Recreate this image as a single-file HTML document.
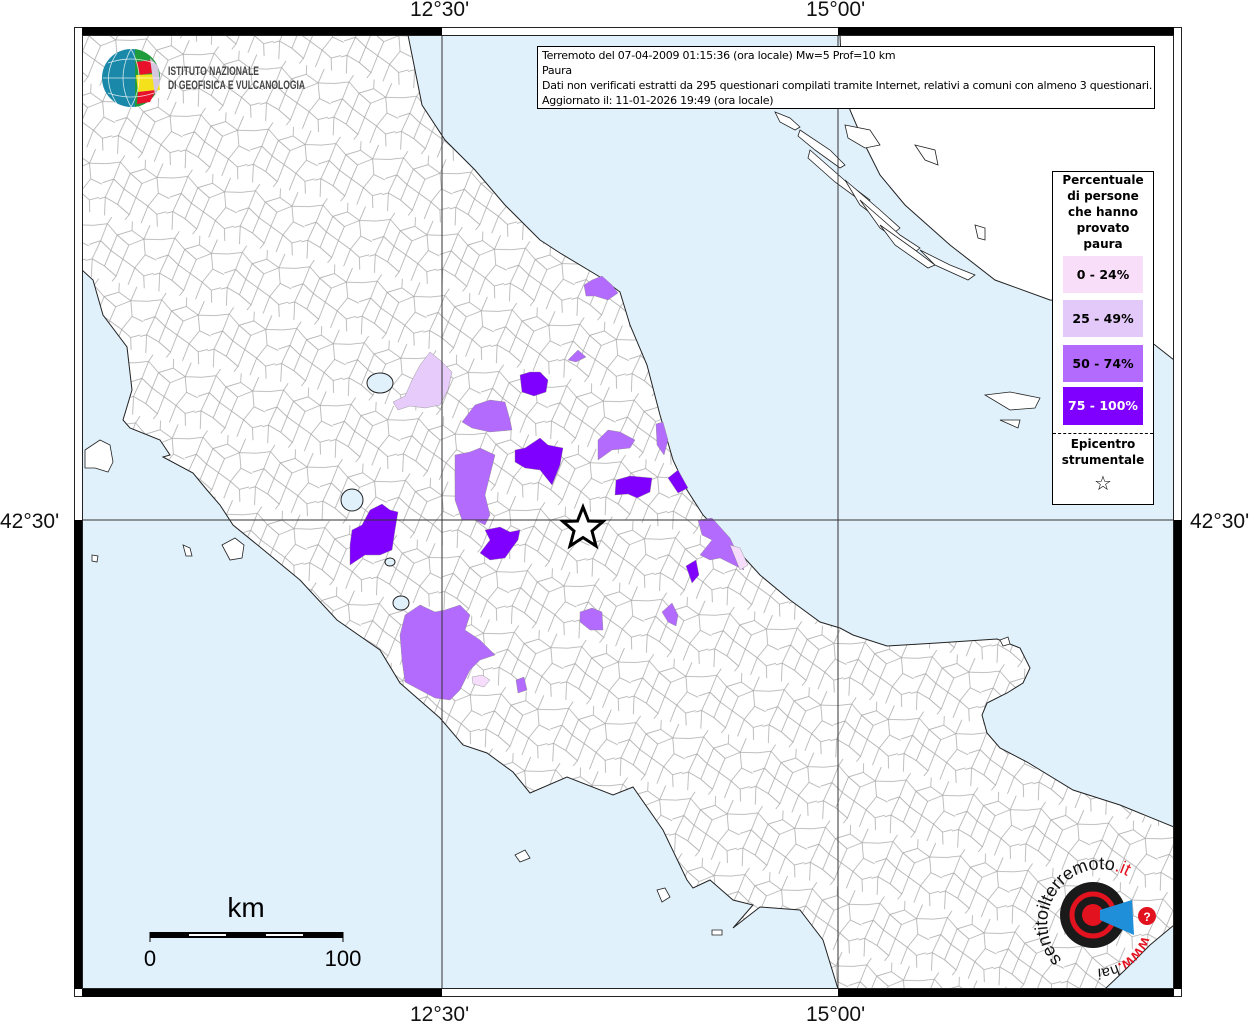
<!DOCTYPE html>
<html><head><meta charset="utf-8">
<style>
html,body{margin:0;padding:0;background:#fff;}
body{width:1255px;height:1024px;overflow:hidden;position:relative;font-family:"Liberation Sans",sans-serif;}
.lab{position:absolute;font-size:21px;color:#111;font-family:"Liberation Sans",sans-serif;}
</style></head><body>
<svg width="1255" height="1024" viewBox="0 0 1255 1024" xmlns="http://www.w3.org/2000/svg" style="position:absolute;left:0;top:0">
<defs>
<pattern id="mun" width="46" height="42" patternUnits="userSpaceOnUse" patternTransform="scale(1.5) rotate(12)">
<path d="M0 8 L9 5 L17 11 L26 6 L35 10 L46 8 M9 5 L7 17 L0 21 M17 11 L15 22 L7 17 M15 22 L24 26 L26 16 L17 11 M26 16 L35 10 L38 20 L46 22 M24 26 L33 30 L38 20 M7 17 L4 30 L0 32 M4 30 L13 33 L15 22 M13 33 L22 38 L24 26 M33 30 L40 34 L46 31 M22 38 L20 42 M33 30 L31 42 M40 34 L42 42 M4 30 L6 42 M26 6 L25 0 M9 5 L11 0 M38 20 L46 22 M35 10 L37 0" fill="none" stroke="#a8a8a8" stroke-width="0.5"/>
</pattern>
<clipPath id="frame"><rect x="82" y="35" width="1092" height="954"/></clipPath>
</defs>
<rect x="82" y="35" width="1092" height="954" fill="#e0f1fc"/>
<g clip-path="url(#frame)">
<path d="M82 35 L408 35 L415 70 L422 105 L445 140 L475 170 L505 205 L540 240 L560 253 L600 277 L620 292 L630 325 L647 365 L660 415 L673 460 L687 490 L703 515 L727 540 L740 553 L760 575 L790 600 L820 622 L840 628 L853 635 L887 646 L937 643 L997 639 L1020 648 L1030 668 L1023 683 L1007 693 L987 703 L982 715 L987 733 L1000 748 L1027 762 L1073 790 L1120 805 L1174 827 L1174 925 L1150 945 L1125 970 L1105 989 L838 989 L823 940 L800 910 L760 907 L733 928 L753 905 L733 900 L710 880 L693 888 L687 880 L663 830 L633 787 L613 795 L567 777 L530 793 L513 772 L487 753 L463 745 L440 718 L400 683 L380 650 L337 620 L300 580 L260 547 L233 525 L220 505 L207 490 L193 473 L163 457 L170 455 L160 440 L130 428 L123 420 L132 390 L127 347 L103 315 L93 280 L82 270 Z" fill="#fff" stroke="none"/>
<path d="M82 35 L408 35 L415 70 L422 105 L445 140 L475 170 L505 205 L540 240 L560 253 L600 277 L620 292 L630 325 L647 365 L660 415 L673 460 L687 490 L703 515 L727 540 L740 553 L760 575 L790 600 L820 622 L840 628 L853 635 L887 646 L937 643 L997 639 L1020 648 L1030 668 L1023 683 L1007 693 L987 703 L982 715 L987 733 L1000 748 L1027 762 L1073 790 L1120 805 L1174 827 L1174 925 L1150 945 L1125 970 L1105 989 L838 989 L823 940 L800 910 L760 907 L733 928 L753 905 L733 900 L710 880 L693 888 L687 880 L663 830 L633 787 L613 795 L567 777 L530 793 L513 772 L487 753 L463 745 L440 718 L400 683 L380 650 L337 620 L300 580 L260 547 L233 525 L220 505 L207 490 L193 473 L163 457 L170 455 L160 440 L130 428 L123 420 L132 390 L127 347 L103 315 L93 280 L82 270 Z" fill="url(#mun)" stroke="#222" stroke-width="1"/>
<path d="M840 35 L1174 35 L1174 360 L1155 345 L1100 305 L1050 300 L995 280 L950 245 L905 205 L880 175 L865 145 L850 110 L842 80 Z" fill="#fff" stroke="#222" stroke-width="1"/>
<g fill="#fff" stroke="#222" stroke-width="0.8">
<path d="M775 112 L790 118 L800 127 L795 130 L780 122 Z"/>
<path d="M800 130 L830 150 L845 165 L840 168 L815 150 L798 136 Z"/>
<path d="M810 150 L850 185 L870 200 L865 204 L835 182 L808 158 Z"/>
<path d="M845 180 L880 210 L900 228 L895 232 L860 205 Z"/>
<path d="M860 200 L900 235 L920 248 L915 252 L880 228 Z"/>
<path d="M880 225 L915 250 L935 265 L928 268 L895 245 Z"/>
<path d="M920 250 L950 265 L975 275 L968 280 L935 265 Z"/>
<path d="M845 125 L870 130 L880 145 L865 148 L848 138 Z"/>
<path d="M915 145 L935 150 L938 165 L925 160 Z"/>
<path d="M975 225 L985 228 L985 240 L978 238 Z"/>
<path d="M985 395 L1010 392 L1040 398 L1035 408 L1010 410 Z M1000 420 L1020 420 L1018 428 Z"/>
<path d="M85 450 L100 440 L110 445 L113 462 L108 472 L95 468 L85 468 Z"/>
<path d="M222 545 L235 538 L244 545 L242 558 L230 560 Z"/>
<path d="M183 545 L190 548 L192 556 L186 556 Z M92 555 L98 556 L97 562 L92 561 Z"/>
<path d="M657 890 L665 888 L670 897 L662 902 Z M712 930 L722 930 L722 935 L712 935 Z M515 855 L525 850 L530 858 L520 862 Z"/>
<path d="M1000 640 L1008 637 L1010 644 L1003 646 Z"/>
</g>
<ellipse cx="380" cy="383" rx="13" ry="10" fill="#e0f1fc" stroke="#222" stroke-width="1"/>
<ellipse cx="352" cy="500" rx="11" ry="11" fill="#e0f1fc" stroke="#222" stroke-width="1"/>
<ellipse cx="401" cy="603" rx="8" ry="7" fill="#e0f1fc" stroke="#222" stroke-width="1"/>
<ellipse cx="390" cy="562" rx="5" ry="4" fill="#e0f1fc" stroke="#222" stroke-width="1"/>
<g stroke="#888" stroke-width="0.4">
<path d="M405 615 L420 605 L435 612 L445 610 L460 605 L470 615 L465 630 L480 640 L495 655 L480 660 L470 670 L460 690 L450 700 L435 698 L420 690 L405 682 L402 660 L400 635 Z" fill="#b36bfd"/>
<path d="M352 530 L362 525 L370 510 L382 504 L390 510 L398 512 L395 530 L392 550 L380 555 L365 555 L350 565 L350 545 Z" fill="#7f00ff"/>
<path d="M455 455 L470 452 L480 448 L495 455 L490 475 L485 495 L490 515 L485 525 L475 520 L462 520 L455 500 L455 480 Z" fill="#b36bfd"/>
<path d="M485 530 L500 527 L510 532 L520 530 L518 540 L512 548 L505 558 L490 560 L480 553 L490 540 Z" fill="#7f00ff"/>
<path d="M515 450 L525 448 L540 438 L548 445 L563 448 L560 465 L552 485 L540 470 L525 468 L515 462 Z" fill="#7f00ff"/>
<path d="M520 375 L530 372 L540 372 L548 380 L546 392 L534 396 L522 392 Z" fill="#7f00ff"/>
<path d="M462 422 L475 405 L490 400 L505 402 L510 420 L512 430 L490 432 L472 428 Z" fill="#b36bfd"/>
<path d="M393 402 L405 396 L412 380 L420 365 L430 352 L440 360 L452 372 L448 390 L440 405 L425 408 L410 406 L398 410 Z" fill="#e6cbfb"/>
<path d="M584 285 L592 280 L602 276 L612 285 L618 293 L608 300 L595 296 L586 296 Z" fill="#b36bfd"/>
<path d="M568 360 L578 350 L586 357 L576 362 Z" fill="#b36bfd"/>
<path d="M598 440 L608 430 L620 432 L635 440 L630 448 L612 450 L598 460 Z" fill="#b36bfd"/>
<path d="M616 480 L630 476 L652 478 L650 492 L637 498 L628 494 L615 495 Z" fill="#7f00ff"/>
<path d="M668 478 L678 470 L688 488 L678 493 Z" fill="#7f00ff"/>
<path d="M656 424 L663 422 L668 440 L664 455 L657 445 Z" fill="#b36bfd"/>
<path d="M698 520 L712 518 L730 538 L738 555 L744 570 L736 566 L720 558 L710 560 L700 555 L712 540 L702 535 Z" fill="#b36bfd"/>
<path d="M730 545 L740 548 L748 565 L740 570 Z" fill="#f5ddfb"/>
<path d="M686 566 L696 560 L699 575 L692 583 Z" fill="#7f00ff"/>
<path d="M580 612 L592 608 L602 612 L603 630 L590 630 L580 622 Z" fill="#b36bfd"/>
<path d="M662 612 L672 603 L678 615 L676 626 L668 622 Z" fill="#b36bfd"/>
<path d="M516 680 L524 677 L527 690 L518 693 Z" fill="#b36bfd"/>
<path d="M472 677 L482 675 L490 680 L484 687 L473 684 Z" fill="#f5ddfb"/>
</g>
<line x1="442" y1="35" x2="442" y2="989" stroke="#333" stroke-width="1"/>
<line x1="838" y1="35" x2="838" y2="989" stroke="#333" stroke-width="1"/>
<line x1="82" y1="520" x2="1174" y2="520" stroke="#333" stroke-width="1"/>
</g>
<rect x="74.5" y="27.5" width="1107" height="969" fill="none" stroke="#222" stroke-width="1"/>
<rect x="82.5" y="35.5" width="1091" height="953" fill="none" stroke="#222" stroke-width="1"/>
<rect x="82" y="27" width="360" height="8" fill="#000"/>
<rect x="838" y="27" width="336" height="8" fill="#000"/>
<rect x="82" y="989" width="360" height="8" fill="#000"/>
<rect x="838" y="989" width="336" height="8" fill="#000"/>
<rect x="74" y="520" width="8" height="469" fill="#000"/>
<rect x="1174" y="520" width="8" height="469" fill="#000"/>
<path d="M583 507 L588.5 521 L603 521.5 L592 531 L596 546 L583 537.5 L570 546 L574 531 L563 521.5 L577.5 521 Z" fill="#fff" stroke="#000" stroke-width="3" stroke-linejoin="miter"/>
<rect x="150" y="932" width="193" height="6" fill="#000"/>
<rect x="189" y="934" width="37" height="2" fill="#fff"/>
<rect x="266" y="934" width="37" height="2" fill="#fff"/>
<path d="M150 932 V942 M343 932 V942" stroke="#000" stroke-width="1"/>
<text x="246" y="917" font-family="Liberation Sans" font-size="28" text-anchor="middle">km</text>
<text x="150" y="966" font-family="Liberation Sans" font-size="22" text-anchor="middle">0</text>
<text x="343" y="966" font-family="Liberation Sans" font-size="22" text-anchor="middle">100</text>
<circle cx="131" cy="78" r="29" fill="#1a88a8"/>
<path d="M135 49 A29 29 0 0 1 160 78 A29 29 0 0 1 135 107 Z" fill="#1e9b3a"/>
<path d="M136 62 L152 60 L158 72 L140 75 Z" fill="#e8102a"/>
<path d="M136 75 L158 74 L160 90 L138 92 Z" fill="#f4e11b"/>
<path d="M138 92 L156 90 L150 102 L137 104 Z" fill="#e8102a"/>
<path d="M150 58 L158 66 L160 82 L155 96 Z" fill="#d5c8de"/>
<g stroke="#fff" stroke-width="0.8" fill="none" opacity="0.8">
<path d="M103 78 H160 M108 63 Q131 55 154 63 M108 93 Q131 101 154 93 M131 49 Q115 78 131 107 M131 49 Q147 78 131 107 M117 53 Q100 78 117 104"/>
</g>
<text x="168" y="75" font-family="Liberation Sans" font-size="12" font-weight="bold" fill="#444" textLength="91" lengthAdjust="spacingAndGlyphs">ISTITUTO NAZIONALE</text>
<text x="168" y="89" font-family="Liberation Sans" font-size="12" font-weight="bold" fill="#444" textLength="137" lengthAdjust="spacingAndGlyphs">DI GEOFISICA E VULCANOLOGIA</text>
<circle cx="1093" cy="915" r="33" fill="#1a1a1a"/>
<circle cx="1093" cy="915" r="21" fill="none" stroke="#e3121f" stroke-width="5"/>
<circle cx="1093" cy="915" r="11" fill="#e3121f"/>
<path d="M1100 910 L1132 900 L1134 935 L1100 920 Z" fill="#1e8fd8"/>
<circle cx="1147" cy="916" r="9" fill="#e3121f"/>
<text x="1147" y="921" font-family="Liberation Sans" font-size="12" font-weight="bold" fill="#fff" text-anchor="middle">?</text>
<path id="arc" d="M1062 960 A47 47 0 1 1 1140 886" fill="none"/>
<text font-family="Liberation Sans" font-size="18" fill="#111"><textPath href="#arc">sentitoilterremoto<tspan fill="#e3121f">.it</tspan></textPath></text>
<path id="arc2" d="M1142 936 A48 48 0 0 1 1088 968" fill="none"/>
<text font-family="Liberation Sans" font-size="15" fill="#e3121f" font-weight="bold"><textPath href="#arc2">www.<tspan fill="#111" font-weight="normal">hai</tspan></textPath></text>
</svg>
<div class="lab" style="left:410px;top:-2px;">12°30'</div>
<div class="lab" style="left:806px;top:-2px;">15°00'</div>
<div class="lab" style="left:410px;top:1003px;">12°30'</div>
<div class="lab" style="left:806px;top:1003px;">15°00'</div>
<div class="lab" style="left:0px;top:510px;">42°30'</div>
<div class="lab" style="left:1190px;top:510px;">42°30'</div>
<div style="position:absolute;left:537px;top:46px;border:1px solid #000;background:#fff;font-size:11px;line-height:15px;padding:1px 0 0 4px;box-sizing:border-box;width:618px;height:63px;color:#000;font-family:'DejaVu Sans','Liberation Sans',sans-serif;letter-spacing:-0.25px;white-space:nowrap;">Terremoto del 07-04-2009 01:15:36 (ora locale) Mw=5 Prof=10 km<br>Paura<br>Dati non verificati estratti da 295 questionari compilati tramite Internet, relativi a comuni con almeno 3 questionari.<br>Aggiornato il: 11-01-2026 19:49 (ora locale)</div>
<div style="position:absolute;left:1052px;top:171px;width:102px;height:334px;border:1px solid #000;background:#fff;box-sizing:border-box;font-family:'DejaVu Sans',sans-serif;font-weight:bold;font-size:12px;text-align:center;color:#000;">
<div style="line-height:16px;margin-top:0px;">Percentuale<br>di persone<br>che hanno<br>provato<br>paura</div>
<div style="margin:4px auto 0;width:80px;height:37px;line-height:37px;background:#f9def9;font-size:12.5px;">0 - 24%</div>
<div style="margin:7px auto 0;width:80px;height:37px;line-height:37px;background:#e3c9fa;font-size:12.5px;">25 - 49%</div>
<div style="margin:8px auto 0;width:80px;height:37px;line-height:37px;background:#b36bfd;font-size:12.5px;">50 - 74%</div>
<div style="margin:5px auto 0;width:80px;height:38px;line-height:38px;background:#7f00ff;color:#fff;font-size:12.5px;">75 - 100%</div>
<div style="border-top:1px dashed #000;margin-top:8px;padding-top:2px;line-height:16px;">Epicentro<br>strumentale<br><span style="font-size:20px;font-weight:normal;line-height:30px;">☆</span></div>
</div>
</body></html>
